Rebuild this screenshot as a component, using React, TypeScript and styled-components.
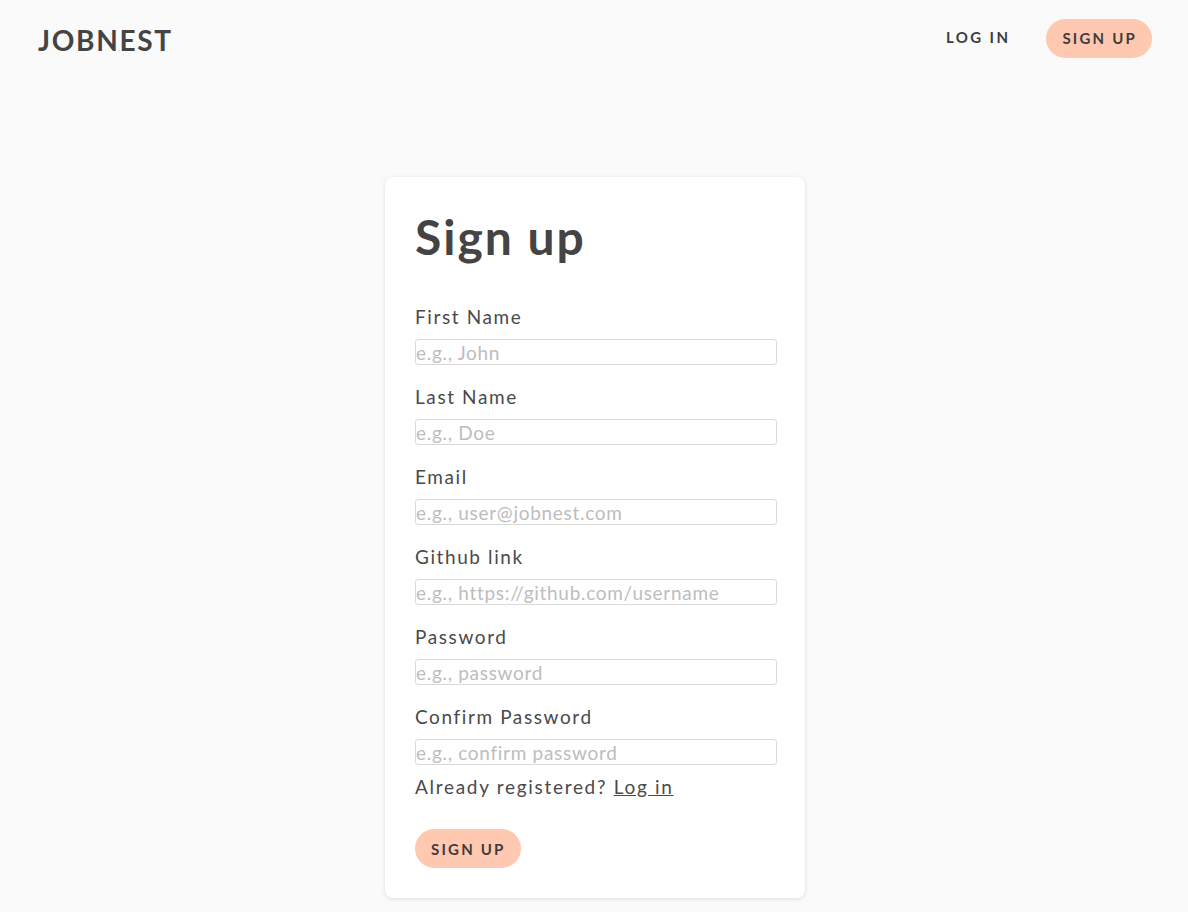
import React from "react";
import styled, { createGlobalStyle } from "styled-components";

const Global = createGlobalStyle`
  * { box-sizing: border-box; }
  body {
    margin: 0;
    background: #fafafa;
    font-family: "Lato", "Noto Sans", sans-serif;
    color: #444;
  }
`;

const Page = styled.div`
  min-height: 912px;
  display: flex;
  flex-direction: column;
`;

const Header = styled.header`
  height: 76px;
  display: flex;
  align-items: center;
  justify-content: space-between;
  padding: 0 36px 0 38px;
`;

const Logo = styled.div`
  font-size: 28px;
  font-weight: 700;
  letter-spacing: 1.7px;
  color: #444;
  margin-top: 4px;
`;

const Nav = styled.nav`
  display: flex;
  align-items: center;
  gap: 20px;
`;

const NavLink = styled.a`
  font-size: 15px;
  font-weight: 700;
  letter-spacing: 2.4px;
  color: #3d3d3d;
  padding: 0 16px;
  margin-top: -2px;
  cursor: pointer;
`;

const PillButton = styled.button`
  height: 39px;
  padding: 0 15px 0 16px;
  border: none;
  border-radius: 20px;
  background: #ffc8b0;
  color: #3d3d3d;
  font-family: inherit;
  font-size: 15px;
  font-weight: 700;
  letter-spacing: 2.2px;
  cursor: pointer;
`;

const Main = styled.main`
  display: flex;
  justify-content: center;
  padding: 101px 0 0 2px;
`;

const Card = styled.form`
  width: 420px;
  background: #fff;
  border-radius: 8px;
  box-shadow: 0 1px 4px rgba(0, 0, 0, 0.12);
  padding: 26px 28px 30px 30px;
  display: flex;
  flex-direction: column;
`;

const Title = styled.h1`
  margin: 0 0 34px;
  font-size: 48px;
  font-weight: 700;
  letter-spacing: 2px;
  color: #444;
  line-height: 68px;
`;

const Field = styled.div<{ $last?: boolean }>`
  display: flex;
  flex-direction: column;
  gap: 10px;
  margin-bottom: ${(p) => (p.$last ? "10px" : "20px")};
`;

const Label = styled.label`
  font-size: 19px;
  letter-spacing: 1.6px;
  color: #4a4a4a;
  line-height: 24px;
`;

const Input = styled.input`
  height: 26px;
  width: 100%;
  border: 1px solid #d9d9d9;
  border-radius: 3px;
  padding: 0;
  font-family: inherit;
  font-size: 19px;
  letter-spacing: 0.7px;
  color: #444;
  outline: none;
  &::placeholder { color: #bdbdbd; }
`;

const Note = styled.p`
  margin: 0 0 30px;
  font-size: 19px;
  letter-spacing: 1.7px;
  color: #4a4a4a;
  line-height: 24px;
`;

const UnderLink = styled.a`
  color: #4a4a4a;
  text-decoration: underline;
  text-decoration-color: #7a3a1a;
  cursor: pointer;
`;

const ButtonRow = styled.div`
  display: flex;
`;

const fields = [
  { label: "First Name", ph: "e.g., John", type: "text" },
  { label: "Last Name", ph: "e.g., Doe", type: "text" },
  { label: "Email", ph: "e.g., user@jobnest.com", type: "email" },
  { label: "Github link", ph: "e.g., https://github.com/username", type: "text" },
  { label: "Password", ph: "e.g., password", type: "password" },
  { label: "Confirm Password", ph: "e.g., confirm password", type: "password" },
];

export default function App() {
  return (
    <Page>
      <Global />
      <Header>
        <Logo>JOBNEST</Logo>
        <Nav>
          <NavLink>LOG IN</NavLink>
          <PillButton type="button">SIGN UP</PillButton>
        </Nav>
      </Header>
      <Main>
        <Card onSubmit={(e) => e.preventDefault()}>
          <Title>Sign up</Title>
          {fields.map((f, i) => (
            <Field key={f.label} $last={i === fields.length - 1}>
              <Label htmlFor={`f${i}`}>{f.label}</Label>
              <Input id={`f${i}`} type={f.type} placeholder={f.ph} />
            </Field>
          ))}
          <Note>
            Already registered? <UnderLink>Log in</UnderLink>
          </Note>
          <ButtonRow>
            <PillButton type="submit">SIGN UP</PillButton>
          </ButtonRow>
        </Card>
      </Main>
    </Page>
  );
}
